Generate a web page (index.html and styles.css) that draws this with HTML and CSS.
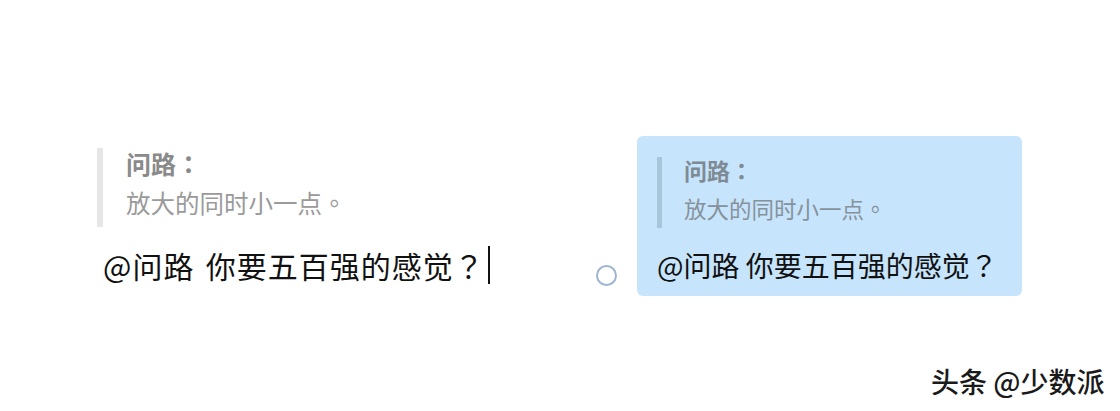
FILE: index.html
```html
<!DOCTYPE html>
<html lang="zh">
<head>
<meta charset="utf-8">
<link rel="stylesheet" href="styles.css">
</head>
<body>
<div class="page">
  <div class="left">
    <div class="quote">
      <div class="q-name">问路<span class="fw" lang="zh-TW">：</span></div>
      <div class="q-text">放大的同时小一点<span class="fw" lang="zh-TW">。</span></div>
    </div>
    <div class="main">@问路&nbsp;&nbsp;你要五百强的感觉<span class="fw" lang="zh-TW">？</span><span class="cursor"></span></div>
  </div>
  <div class="radio"></div>
  <div class="bubble">
    <div class="b-quote">
      <div class="b-name">问路<span class="fw" lang="zh-TW">：</span></div>
      <div class="b-text">放大的同时小一点<span class="fw" lang="zh-TW">。</span></div>
    </div>
    <div class="b-main">@问路 你要五百强的感觉<span class="fw" lang="zh-TW">？</span></div>
  </div>
</div>
<div class="watermark">头条 @少数派</div>
</body>
</html>
```
FILE: styles.css
```css
html, body {
  margin: 0;
  padding: 0;
  background: #ffffff;
  width: 1120px;
  height: 411px;
  overflow: hidden;
  font-family: "Noto Sans CJK SC", "Noto Sans", sans-serif;
}
.fw {
  font-family: "Noto Sans CJK TC", "Noto Sans CJK SC", sans-serif;
  display: inline-block;
  width: 1em;
  text-align: left;
}
.page {
  display: flex;
  align-items: flex-start;
  padding: 136px 0 0 97px;
}
.left {
  width: 499px;
  margin-top: 12px;
}
.quote {
  border-left: 6px solid #e6e6e6;
  padding: 0 0 7px 23px;
}
.q-name {
  font-size: 25px;
  line-height: 30px;
  font-weight: 700;
  color: #8a8a8a;
}
.q-text {
  margin-top: 8px;
  font-size: 24.5px;
  line-height: 34px;
  color: #9a9a9a;
}
.main {
  margin: 18px 0 0 6px;
  font-size: 30px;
  line-height: 40px;
  letter-spacing: 1px;
  word-spacing: -2px;
  color: #111111;
  white-space: nowrap;
  display: flex;
  align-items: center;
}
.cursor {
  display: inline-block;
  width: 2px;
  height: 38px;
  background: #111111;
  margin-left: 4px;
}
.radio {
  width: 17px;
  height: 17px;
  border: 2px solid #9db5d0;
  border-radius: 50%;
  margin-top: 129px;
  flex: none;
}
.bubble {
  margin-left: 20px;
  width: 365px;
  height: 139px;
  padding: 21px 0 0 20px;
  background: #c6e4fb;
  border-radius: 6px;
}
.b-quote {
  border-left: 5px solid #a9c5dc;
  padding: 0 0 3px 22px;
}
.b-name {
  font-size: 23px;
  line-height: 26px;
  font-weight: 700;
  color: #7f8b94;
}
.b-text {
  margin-top: 8px;
  font-size: 22.5px;
  line-height: 34px;
  color: #86929b;
}
.b-main {
  margin-top: 19px;
  font-size: 28px;
  line-height: 36px;
  color: #111111;
  white-space: nowrap;
}
.watermark {
  position: absolute;
  left: 931px;
  top: 363px;
  font-size: 28px;
  line-height: 36px;
  font-weight: 500;
  color: #1a1a1a;
  text-shadow: 0 0 2px #ffffff, 1px 1px 1px #ffffff;
  white-space: nowrap;
}
```
